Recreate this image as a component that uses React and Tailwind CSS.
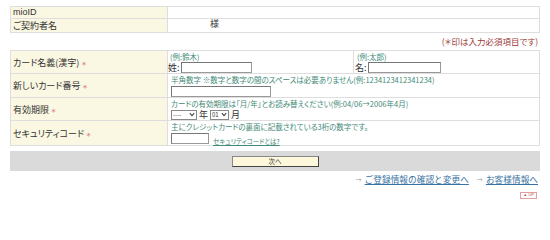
import React from "react";

const jp = "font-['Noto_Sans_CJK_JP','Noto_Sans',sans-serif] [font-feature-settings:'palt']";
const labelCell = "bg-[#faf7e2] border border-[#dedede] pl-[2px] text-[#333] align-middle w-[157px]";
const valueCell = "bg-white border border-[#dedede] align-top";
const hint = "text-[7.5px] leading-[8px] h-[8px] text-[#3f8a78] whitespace-nowrap";

const Star = () => <span className="text-[#d06a6a] text-[6px] ml-[2px]">＊</span>;

const Field = ({ className }) => (
  <input type="text" className={`border border-[#999] border-t-[#777] border-l-[#777] bg-white h-[11px] outline-none ${className}`} />
);

const Select = ({ value, className }) => (
  <span className={`inline-flex items-center justify-between border border-[#888] bg-white h-[10px] px-[1px] text-[6px] leading-none text-[#333] ${className}`}>
    <span>{value}</span>
    <svg width="6" height="5" viewBox="0 0 6 5" className="ml-[1px]">
      <path d="M0.8 1.2 L3 3.6 L5.2 1.2" fill="none" stroke="#444" strokeWidth="1.1" />
    </svg>
  </span>
);

export default function App() {
  return (
    <div className={`${jp} px-[10px] pt-[6px] text-[9px] leading-none text-[#333]`}>
      {/* customer info */}
      <table className="w-full border-collapse">
        <tbody>
          <tr className="h-[12px]">
            <td className={`${labelCell} font-['Liberation_Sans',sans-serif]`}>mioID</td>
            <td className={valueCell}></td>
          </tr>
          <tr className="h-[14px]">
            <td className={labelCell}>ご契約者名</td>
            <td className={`${valueCell} align-middle pl-[42px]`}>様</td>
          </tr>
        </tbody>
      </table>

      <div className="text-right text-[#9c3a3a] text-[8.5px] mt-[4px] pr-[2px] h-[9px]">(＊印は入力必須項目です)</div>

      {/* card form */}
      <table className="w-full border-collapse mt-[4px]">
        <tbody>
          <tr className="h-[23px]">
            <td className={labelCell}>カード名義(漢字)<Star /></td>
            <td className={`${valueCell} w-[186px] pt-[2px]`}>
              <div className={`${hint} pl-[2px]`}>(例:鈴木)</div>
              <div className="flex items-center gap-[1px] mt-[1px] h-[11px]">
                <span>姓:</span>
                <Field className="w-[71px]" />
              </div>
            </td>
            <td className={`${valueCell} pt-[2px] pl-[1px]`}>
              <div className={`${hint} pl-[2px]`}>(例:太郎)</div>
              <div className="flex items-center gap-[1px] mt-[1px] h-[11px]">
                <span>名:</span>
                <Field className="w-[73px]" />
              </div>
            </td>
          </tr>
          <tr className="h-[23px]">
            <td className={labelCell}>新しいカード番号<Star /></td>
            <td colSpan={2} className={`${valueCell} pt-[2px] pl-[3px]`}>
              <div className={hint}>半角数字 ※数字と数字の間のスペースは必要ありません(例:1234123412341234)</div>
              <div className="flex mt-[2px] h-[11px]">
                <Field className="w-[100px]" />
              </div>
            </td>
          </tr>
          <tr className="h-[23px]">
            <td className={labelCell}>有効期限<Star /></td>
            <td colSpan={2} className={`${valueCell} pt-[2px] pl-[3px]`}>
              <div className={hint}>カードの有効期限は「月/年」とお読み替えください(例:04/06→2006年4月)</div>
              <div className="flex items-center gap-[2px] mt-[1px] h-[11px]">
                <Select value="----" className="w-[26px]" />
                <span>年</span>
                <Select value="01" className="w-[19px]" />
                <span>月</span>
              </div>
            </td>
          </tr>
          <tr className="h-[25px]">
            <td className={labelCell}>セキュリティコード<Star /></td>
            <td colSpan={2} className={`${valueCell} pt-[2px] pl-[3px]`}>
              <div className={hint}>主にクレジットカードの裏面に記載されている3桁の数字です。</div>
              <div className="flex items-end gap-[4px] mt-[2px] h-[11px]">
                <Field className="w-[38px]" />
                <a href="#" className="text-[6.5px] text-[#3f8a78] underline">セキュリティコードとは?</a>
              </div>
            </td>
          </tr>
        </tbody>
      </table>

      {/* submit bar */}
      <div className="mt-[5px] h-[20px] bg-[#dadada] flex items-center justify-center">
        <button type="button" className="w-[87px] h-[11px] bg-[#fdf8dc] border border-[#888] border-r-[#444] border-b-[#444] text-[6.5px] leading-none text-[#333] flex items-center justify-center">
          次へ
        </button>
      </div>

      {/* links */}
      <div className="flex justify-end items-center mt-[5px] pr-[2px] text-[8.7px] [font-feature-settings:normal] gap-[8px]">
        <span className="flex items-center gap-[3px]">
          <span className="text-[#999] text-[6px]">→</span>
          <a href="#" className="text-[#3a73a3] underline">ご登録情報の確認と変更へ</a>
        </span>
        <span className="flex items-center gap-[3px]">
          <span className="text-[#999] text-[6px]">→</span>
          <a href="#" className="text-[#3a73a3] underline">お客様情報へ</a>
        </span>
      </div>

      <div className="flex justify-end mt-[7px] pr-[3px]">
        <span className="border border-[#e0a0a0] h-[7px] px-[2px] flex items-center text-[4px] leading-none text-[#c05050] font-['Liberation_Sans',sans-serif]">▲ UP</span>
      </div>
    </div>
  );
}
